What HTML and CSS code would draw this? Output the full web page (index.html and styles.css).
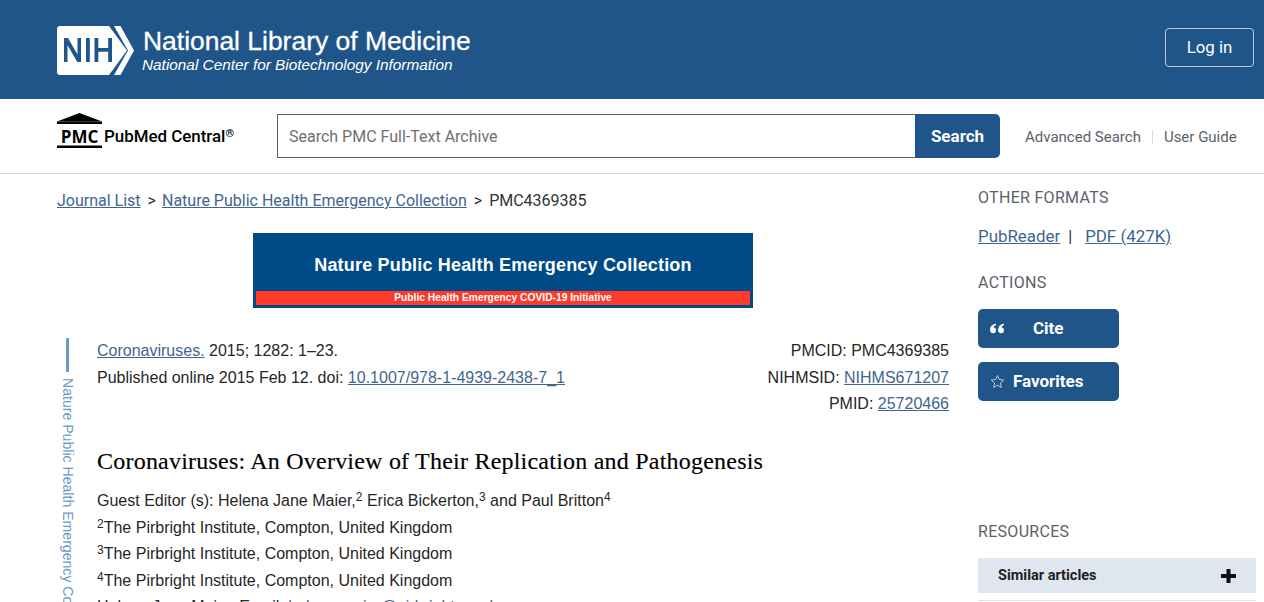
FILE: index.html
```html
<!DOCTYPE html>
<html lang="en">
<head>
<meta charset="utf-8">
<title>Coronaviruses: An Overview of Their Replication and Pathogenesis</title>
<link rel="stylesheet" href="styles.css">
</head>
<body>
<header class="ncbi-bar">
  <a class="nih-brand" href="#">
    <svg class="nih-logo" width="78" height="49" viewBox="0 0 78 49" aria-hidden="true">
      <path class="logo-fill" d="M3 0H52L70 24.500L52 49H3Q0 49 0 46V3Q0 0 3 0Z"/>
      <path class="logo-fill" d="M57 0H63.500L77 24.500L63.500 49H57L71 24.500Z"/>
      <g class="nih-letters">
        <path d="M7 36V12H11L20.500 28.500V12H24V36H20.300L10.500 19.300V36Z"/>
        <path d="M29 12H32.800V36H29Z"/>
        <path d="M37.500 12H41.300V22H51.200V12H55V36H51.200V25.700H41.300V36H37.500Z"/>
      </g>
    </svg>
    <span class="nih-text">
      <span class="nih-title">National Library of Medicine</span>
      <span class="nih-sub">National Center for Biotechnology Information</span>
    </span>
  </a>
  <a class="login" href="#">Log in</a>
</header>

<section class="search-bar">
  <a class="pmc-brand" href="#">
    <svg class="pmc-logo" width="47" height="36" viewBox="0 0 47 36" aria-hidden="true">
      <path d="M22.500 0L45 8.500H0Z"/>
      <rect x="0" y="8.500" width="45" height="2.500"/>
      <rect x="0" y="32.500" width="45" height="2.500"/>
      <text class="pmc-letters" x="22.500" y="29.500" text-anchor="middle">PMC</text>
    </svg>
    <span class="pmc-name">PubMed Central<sup>®</sup></span>
  </a>
  <form class="search-form">
    <input class="search-input" type="text" placeholder="Search PMC Full-Text Archive">
    <button class="search-btn" type="button">Search</button>
  </form>
  <nav class="search-links">
    <a href="#">Advanced Search</a>
    <span class="search-sep"></span>
    <a href="#">User Guide</a>
  </nav>
</section>

<main class="layout">
  <div class="content">
    <nav class="crumbs">
      <a href="#">Journal List</a><span class="crumb-gt">&gt;</span><a href="#">Nature Public Health Emergency Collection</a><span class="crumb-gt">&gt;</span><span>PMC4369385</span>
    </nav>
    <div class="banner">
      <div class="banner-title">Nature Public Health Emergency Collection</div>
      <div class="banner-strip">Public Health Emergency COVID-19 Initiative</div>
    </div>
    <div class="article-wrap">
      <div class="rail">
        <span class="rail-bar"></span>
        <span class="rail-text">Nature Public Health Emergency Collection</span>
      </div>
      <article class="article">
        <div class="meta">
          <div>
            <div><a href="#">Coronaviruses.</a> 2015; 1282: 1–23.</div>
            <div>Published online 2015 Feb 12. doi: <a href="#">10.1007/978-1-4939-2438-7_1</a></div>
          </div>
          <div class="meta-ids">
            <div>PMCID: PMC4369385</div>
            <div>NIHMSID: <a href="#">NIHMS671207</a></div>
            <div>PMID: <a href="#">25720466</a></div>
          </div>
        </div>
        <h1 class="title">Coronaviruses: An Overview of Their Replication and Pathogenesis</h1>
        <div>Guest Editor (s): Helena Jane Maier,<sup>2</sup> Erica Bickerton,<sup>3</sup> and Paul Britton<sup>4</sup></div>
        <div><sup>2</sup>The Pirbright Institute, Compton, United Kingdom</div>
        <div><sup>3</sup>The Pirbright Institute, Compton, United Kingdom</div>
        <div><sup>4</sup>The Pirbright Institute, Compton, United Kingdom</div>
        <div>Helena Jane Maier, Email: <a class="plain" href="#">helena.maier@pirbright.ac.uk</a>.</div>
      </article>
    </div>
  </div>

  <aside class="side">
    <h2 class="side-head">OTHER FORMATS</h2>
    <div class="formats"><a href="#">PubReader</a><span class="fmt-sep">|</span><a href="#">PDF (427K)</a></div>
    <h2 class="side-head actions-head">ACTIONS</h2>
    <a class="action cite" href="#">
      <svg class="quote-icon" width="14" height="11" viewBox="0 0 14 11" aria-hidden="true">
        <path d="M6 0.500V2C4.500 2.600 3.800 3.500 3.600 4.500C5 4.500 6 5.500 6 7.300C6 9.200 4.900 10.300 3.100 10.300C1.200 10.300 0 9 0 6.800C0 3.800 2 1.300 6 0.500Z"/>
        <path d="M14 0.500V2C12.500 2.600 11.800 3.500 11.600 4.500C13 4.500 14 5.500 14 7.300C14 9.200 12.900 10.300 11.100 10.300C9.200 10.300 8 9 8 6.800C8 3.800 10 1.300 14 0.500Z"/>
      </svg>
      <span>Cite</span>
    </a>
    <a class="action fav" href="#">
      <svg class="star-icon" width="15" height="15" viewBox="0 0 24 24" aria-hidden="true">
        <path d="M12 2.500L14.900 8.900L22 9.700L16.700 14.500L18.200 21.500L12 17.900L5.800 21.500L7.300 14.500L2 9.700L9.100 8.900Z"/>
      </svg>
      <span>Favorites</span>
    </a>
    <h2 class="side-head resources-head">RESOURCES</h2>
    <div class="accordion">
      <span>Similar articles</span>
      <svg class="plus-icon" width="17" height="16" viewBox="0 0 17 16" aria-hidden="true"><path d="M6.500 1H10.500V6H16V10H10.500V15H6.500V10H1V6H6.500Z"/></svg>
    </div>
    <div class="accordion-rule"></div>
  </aside>
</main>
</body>
</html>
```
FILE: styles.css
```css
* { box-sizing: border-box; }
html, body { margin: 0; height: 602px; overflow: hidden; background: #fff; }
body { font-family: "Liberation Sans", Arial, sans-serif; font-size: 16px; line-height: 26.4px; color: #262626; }
a { color: #40668f; }

.ncbi-bar { height: 99px; background: #20558a; display: flex; align-items: flex-start; justify-content: space-between; padding: 26px 10px 0 57px; }
.nih-brand { display: flex; color: #fff; text-decoration: none; gap: 8px; }
.nih-logo { flex: none; }
.logo-fill { fill: #fff; }
.nih-letters path { fill: #20558a; }
.nih-text { display: flex; flex-direction: column; font-family: "Liberation Sans", sans-serif; }
.nih-title { font-size: 26.450px; line-height: 30px; white-space: nowrap; -webkit-text-stroke: .3px #fff; }
.nih-sub { font-size: 15.350px; line-height: 18px; margin-left: -1px; font-style: italic; white-space: nowrap; }
.login { margin-top: 2px; width: 89px; height: 39px; border: 1px solid #b8c9da; border-radius: 4px; color: #fff; font: 400 16.800px/37px Roboto, sans-serif; text-align: center; text-decoration: none; }

.search-bar { height: 75px; border-bottom: 1px solid #d9d9d9; display: flex; align-items: flex-start; padding: 15px 0 0 57px; }
.pmc-brand { width: 220px; display: flex; align-items: flex-start; color: #000; text-decoration: none; flex: none; }
.pmc-logo { fill: #000; flex: none; margin-top: -1px; }
.pmc-letters { font: 700 17px "Open Sans", sans-serif; }
.pmc-name { font: 500 16.900px/20px Roboto, sans-serif; margin: 12px 0 0 0; white-space: nowrap; }
.pmc-name sup { font-size: 11px; line-height: 0; vertical-align: 5px; }
.search-form { display: flex; width: 723px; height: 44px; }
.search-input { flex: 1; min-width: 0; height: 44px; padding: 0 11px; border: 1px solid #5c5c5c; border-right: 0; border-radius: 0; font: 400 16px Roboto, sans-serif; outline: 0; }
.search-input::placeholder { color: #707070; opacity: 1; }
.search-btn { width: 85px; height: 44px; border: 0; padding: 0; border-radius: 0 5px 5px 0; background: #20558a; color: #fff; font: 700 17px Roboto, sans-serif; }
.search-links { display: flex; align-items: center; height: 44px; padding-top: 2px; margin-left: 25px; font: 400 15px Roboto, sans-serif; white-space: nowrap; }
.search-links a { color: #5b616b; text-decoration: none; }
.search-sep { width: 1px; height: 14px; background: #d6dfea; margin: 0 11px; }

.layout { display: flex; align-items: flex-start; padding-left: 57px; }
.content { width: 892px; flex: none; }
.crumbs { margin-top: 14px; font-family: Roboto, sans-serif; color: #333; }
.crumb-gt { margin: 0 7px; }
.crumb-gt:first-of-type { margin-right: 6px; }
.banner { width: 500px; height: 75px; margin: 19px auto 0; padding: 0 3px 3px; background: #004b87; display: flex; flex-direction: column; font-family: "Liberation Sans", sans-serif; font-weight: 700; color: #fff; text-align: center; }
.banner-title { flex: 1; font-size: 18px; line-height: 20px; letter-spacing: .18px; padding-top: 22px; }
.banner-strip { height: 14px; background: #ff3a2b; font-size: 10.250px; line-height: 14px; }

.article-wrap { display: flex; margin-top: 30px; }
.rail { width: 40px; flex: none; display: flex; flex-direction: column; align-items: flex-start; padding-left: 9px; height: 300px; overflow: hidden; }
.rail-bar { width: 3px; height: 34px; background: #6a9ac8; flex: none; margin-bottom: 6px; }
.rail-text { writing-mode: vertical-rl; font-size: 14.100px; line-height: 17px; color: #6a9ac8; white-space: nowrap; margin-left: -7px; }
.article { width: 852px; flex: none; }
.meta { display: flex; justify-content: space-between; }
.meta-ids { text-align: right; }
.title { margin: 27px 0 11.800px; font: 400 24px/32px "Liberation Serif", serif; letter-spacing: .22px; color: #000; -webkit-text-stroke: .15px #000; }
sup { font-size: 12px; line-height: 0; vertical-align: 5px; }
.plain { color: #40668f; text-decoration: none; }

.side { margin-left: 29px; width: 278px; flex: none; font-family: Roboto, sans-serif; }
.side-head { margin: 11px 0 0; font: 400 16px/26px Roboto, sans-serif; color: #5b616b; letter-spacing: .3px; }
.formats { margin-top: 12px; font-size: 16.900px; line-height: 26px; }
.fmt-sep { margin: 0 13px 0 8px; font-size: 16px; }
.actions-head { margin-top: 20px; }
.action { display: flex; align-items: center; width: 141px; height: 39px; border-radius: 5px; background: #20558a; color: #fff; font-size: 17px; font-weight: 700; text-decoration: none; padding-left: 12px; }
.cite { margin-top: 13px; gap: 29px; }
.fav { margin-top: 14px; gap: 8px; }
.quote-icon { fill: #fff; }
.star-icon { fill: none; stroke: #c4d3e2; stroke-width: 1.500; }
.resources-head { margin-top: 118px; }
.accordion { margin-top: 13px; height: 35px; background: #dfe6ef; padding: 0 19px 0 20px; display: flex; align-items: center; justify-content: space-between; font: 700 14.500px Roboto, sans-serif; color: #212121; }
.plus-icon { fill: #111; }
.accordion-rule { height: 1px; margin-top: 7px; background: #e3e3e3; }
```
